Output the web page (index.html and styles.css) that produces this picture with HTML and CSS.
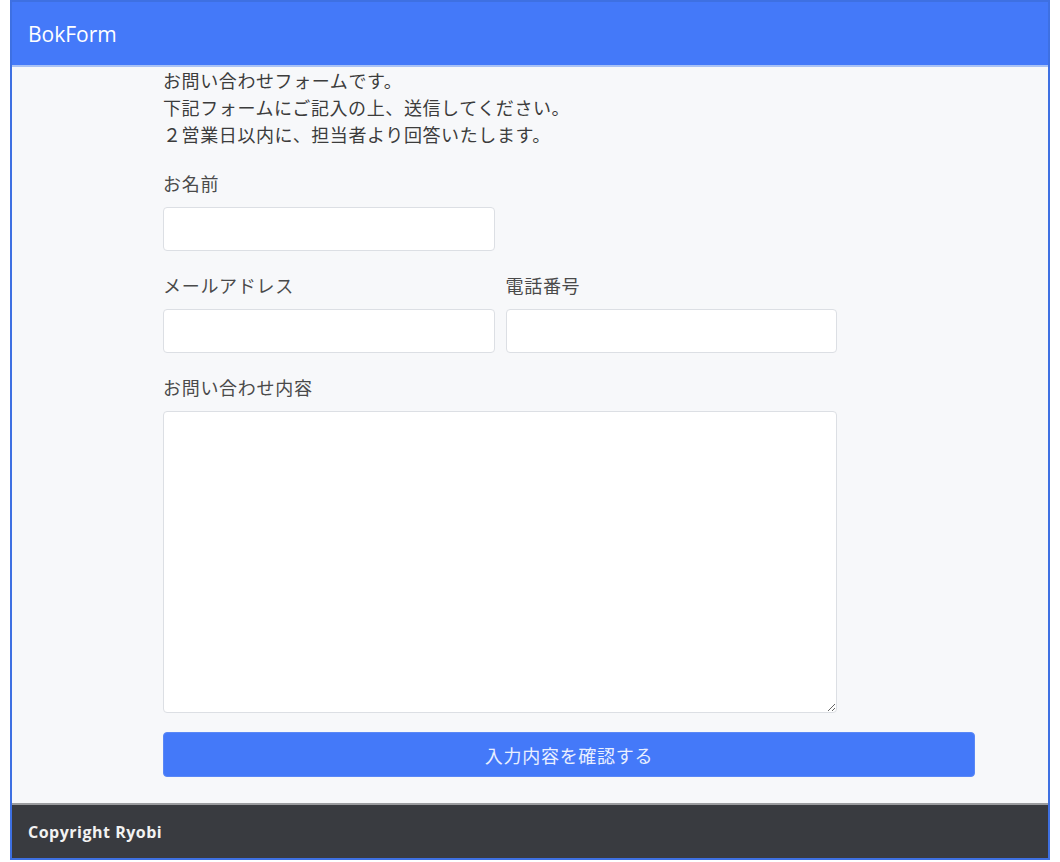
FILE: index.html
```html
<!DOCTYPE html>
<html lang="ja">
<head>
<meta charset="utf-8">
<title>BokForm</title>
<link rel="stylesheet" href="styles.css">
</head>
<body>
<div class="frame">
  <header class="navbar">
    <span class="brand">BokForm</span>
  </header>
  <main class="main">
    <div class="content">
      <p class="intro">お問い合わせフォームです。<br>下記フォームにご記入の上、送信してください。<br>２営業日以内に、担当者より回答いたします。</p>
      <form class="form">
        <div class="field field-name">
          <label class="label">お名前</label>
          <input class="input" type="text">
        </div>
        <div class="row">
          <div class="field">
            <label class="label">メールアドレス</label>
            <input class="input" type="text">
          </div>
          <div class="field">
            <label class="label">電話番号</label>
            <input class="input" type="text">
          </div>
        </div>
        <div class="field field-wide">
          <label class="label">お問い合わせ内容</label>
          <textarea class="textarea"></textarea>
        </div>
        <button class="submit" type="button">入力内容を確認する</button>
      </form>
    </div>
  </main>
  <footer class="footer">
    <span class="copy">Copyright Ryobi</span>
  </footer>
</div>
</body>
</html>
```

FILE: styles.css
```css
* { box-sizing: border-box; }
html, body { margin: 0; padding: 0; background: #ffffff; }
body {
  font-family: "Noto Sans CJK JP", "Noto Sans", sans-serif;
  color: #3a3a3a;
}
.frame {
  margin-left: 10px;
  width: 1040px;
  height: 860px;
  border: 2px solid #3e70e2;
  display: flex;
  flex-direction: column;
  background: #f7f8fa;
}
.navbar {
  height: 65px;
  background: #4479f9;
  border-bottom: 2px solid #a9c2f5;
  display: flex;
  align-items: center;
  padding-left: 16px;
  flex: none;
}
.brand {
  font-family: "Open Sans", "Noto Sans", sans-serif;
  font-size: 21px;
  color: #ffffff;
}
.main { flex: 1; }
.content {
  padding-left: 151px;
}
.intro {
  margin: 0;
  font-size: 18px;
  line-height: 27px;
  color: #3c3c3c;
  letter-spacing: 0.6px;
}
.form { display: flex; flex-direction: column; }
.field { display: flex; flex-direction: column; }
.field-name { margin-top: 22px; width: 332px; }
.row { display: flex; gap: 11px; margin-top: 21px; width: 674px; }
.row .field { flex: 1; }
.field-wide { margin-top: 21px; width: 674px; }
.label {
  font-size: 18px;
  line-height: 27px;
  color: #4a4a4a;
  letter-spacing: 0.7px;
  margin-bottom: 10px;
}
.input {
  height: 44px;
  background: #ffffff;
  border: 1px solid #dcdfe4;
  border-radius: 4px;
  font: inherit;
  padding: 0 10px;
}
.textarea {
  height: 302px;
  background: #ffffff;
  border: 1px solid #dcdfe4;
  border-radius: 4px;
  font: inherit;
  padding: 8px 10px;
}
.submit {
  margin-top: 19px;
  width: 812px;
  height: 45px;
  background: #4479f9;
  border: 1px solid #5a88f6;
  border-radius: 4px;
  color: #e9efff;
  font-family: "Noto Sans CJK JP", sans-serif;
  font-size: 18px;
  letter-spacing: 0.7px;
}
.footer {
  height: 55px;
  background: #393b40;
  border-top: 2px solid #9b9c9f;
  display: flex;
  align-items: center;
  padding-left: 16px;
  flex: none;
}
.copy {
  font-family: "Open Sans", "Noto Sans", sans-serif;
  font-weight: 700;
  font-size: 16px;
  letter-spacing: 0.5px;
  color: #f2f2f2;
}
```
